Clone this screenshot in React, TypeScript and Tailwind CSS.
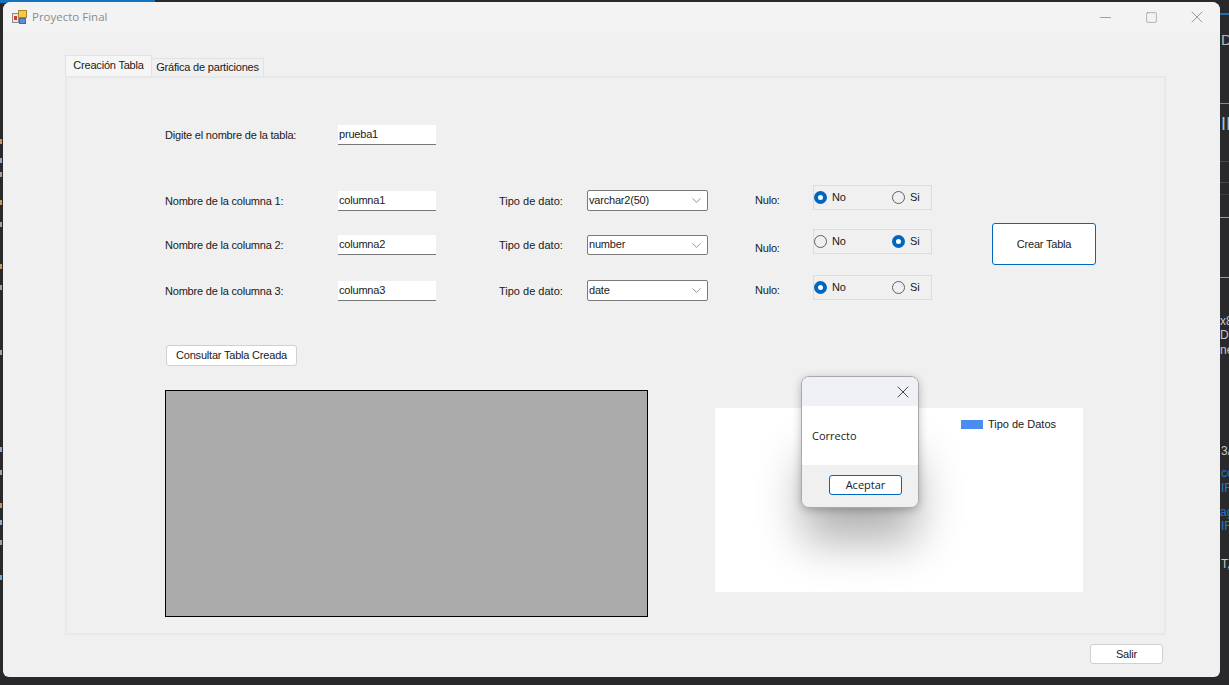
import { ChevronDown, Minus, Square, X } from 'lucide-react';

const columnas = [
  { nombre: 'columna1', tipo: 'varchar2(50)', nulo: 'No', nuloTop: 'mt-[7px]', rowTop: 'mt-[40px]', comboTop: 'mt-[5px] h-[21px]' },
  { nombre: 'columna2', tipo: 'number', nulo: 'Si', nuloTop: 'mt-[11px]', rowTop: 'mt-[19px]', comboTop: 'mt-[6px] h-[20px]' },
  { nombre: 'columna3', tipo: 'date', nulo: 'No', nuloTop: 'mt-[7px]', rowTop: 'mt-[21px]', comboTop: 'mt-[5px] h-[21px]' },
];

// piezas de la ventana de atras que asoman por los bordes
const fondo = [
  { text: 'D', cls: 'left-[1221px] top-[32px] text-[#b8b8b8] text-[15px]' },
  { text: 'II', cls: 'left-[1221px] top-[115px] text-[#9fc3d6] text-[18px]' },
  { text: 'x8', cls: 'left-[1220px] top-[315px] text-[#c8c8c8] text-[12px]' },
  { text: 'Dra', cls: 'left-[1220px] top-[329px] text-[#c8c8c8] text-[12px]' },
  { text: 'ne', cls: 'left-[1220px] top-[344px] text-[#c8c8c8] text-[12px]' },
  { text: '3/', cls: 'left-[1221px] top-[445px] text-[#c8c8c8] text-[12px]' },
  { text: 'cc', cls: 'left-[1221px] top-[467px] text-[#1e78c8] text-[12px]' },
  { text: 'IF', cls: 'left-[1221px] top-[482px] text-[#1e78c8] text-[12px]' },
  { text: 'ag', cls: 'left-[1220px] top-[506px] text-[#1e78c8] text-[12px]' },
  { text: 'IF', cls: 'left-[1221px] top-[520px] text-[#1e78c8] text-[12px]' },
  { text: 'T,', cls: 'left-[1221px] top-[558px] text-[#c8c8c8] text-[12px]' },
];

const lineas = [
  'top-[103px] bg-[#8a8a8a]',
  'top-[161px] bg-[#48484c]',
  'top-[182px] bg-[#48484c]',
  'top-[194px] bg-[#3c3c40]',
  'top-[217px] bg-[#9a9a9a]',
  'top-[277px] bg-[#9a9a9a]',
];

const marcas = [
  'top-[139px] bg-[#c79358]',
  'top-[200px] bg-[#c79358]',
  'top-[264px] bg-[#c79358]',
  'top-[503px] bg-[#c79358]',
  'top-[575px] bg-[#6fa8d8]',
  'top-[158px] bg-[#8fa9c4]',
  'top-[172px] bg-[#a0a0a0]',
  'top-[222px] bg-[#a0a0a0]',
  'top-[285px] bg-[#a0a0a0]',
  'top-[350px] bg-[#a0a0a0]',
  'top-[447px] bg-[#8fa9c4]',
  'top-[470px] bg-[#a0a0a0]',
  'top-[520px] bg-[#8fa9c4]',
  'top-[540px] bg-[#a0a0a0]',
];

function Radio({ checked, label, width }: { checked: boolean; label: string; width: string }) {
  return (
    <div className={`flex items-center ${width}`}>
      {checked ? (
        <span className="box-border w-[13px] h-[13px] rounded-full border-[4px] border-[#0067c0] bg-white" />
      ) : (
        <span className="box-border w-[13px] h-[13px] rounded-full border border-[#5f5f5f] bg-[#f0f0f0]" />
      )}
      <span className="ml-[5px] text-[#1a1a1a]">{label}</span>
    </div>
  );
}

function AppIcon() {
  return (
    <svg width="16" height="16" viewBox="0 0 16 16" className="shrink-0">
      <rect x="0.5" y="4.5" width="6" height="9" fill="#e8e8e8" stroke="#8a8a8a" />
      <rect x="2" y="7" width="3" height="4" fill="#d8392b" />
      <rect x="6.5" y="1.5" width="8" height="7" fill="#f7c93e" stroke="#a9882a" />
      <rect x="7.5" y="9.5" width="6" height="5" fill="#5b8fd8" stroke="#47689c" />
    </svg>
  );
}

export default function App() {
  return (
    <div className="relative w-[1229px] h-[685px] overflow-hidden bg-[#29292c] font-['Liberation_Sans',sans-serif] text-[11px] tracking-[-0.2px] text-[#1a1a1a]">
      {/* escritorio de fondo */}
      <div className="absolute left-0 top-0 w-[155px] h-[3px] bg-[#1273c0]" />
      <div className="absolute left-[1218px] top-[13px] w-[11px] h-[2px] bg-[#1f6fb0]" />
      {lineas.map((l) => (
        <div key={l} className={`absolute left-[1218px] w-[11px] h-px ${l}`} />
      ))}
      {fondo.map((f) => (
        <span key={f.cls} className={`absolute leading-none tracking-normal ${f.cls}`}>
          {f.text}
        </span>
      ))}
      {marcas.map((m) => (
        <div key={m} className={`absolute left-0 w-[2px] h-[5px] ${m}`} />
      ))}

      {/* ventana principal */}
      <div className="absolute left-[3px] top-[2px] w-[1217px] h-[675px] rounded-t-[8px] rounded-b-[6px] bg-[#f0f0f0] flex flex-col">
        <div className="h-[30px] shrink-0 flex items-center pl-[9px] rounded-t-[8px] bg-[#f3f3f3]">
          <AppIcon />
          <span className="ml-[4px] font-['Open_Sans',sans-serif] tracking-normal text-[#8b8b8b] text-[11.5px]">Proyecto Final</span>
          <div className="ml-auto flex items-center text-[#7a7a7a]">
            <Minus size={17} strokeWidth={1} className="mr-[31px]" />
            <Square size={13} strokeWidth={1} className="mr-[29px]" />
            <X size={20} strokeWidth={0.9} className="mr-[13px]" />
          </div>
        </div>

        <div className="pl-[62px] pr-[54px] pt-[23px]">
          <div className="flex items-end h-[21px]">
            <div className="box-border w-[87px] h-[21px] whitespace-nowrap bg-[#f6f6f6] border border-b-0 border-[#e2e2e2] flex items-center justify-center pb-[2px]">
              Creación Tabla
            </div>
            <div className="box-border w-[112px] h-[18px] whitespace-nowrap bg-[#f0f0f0] border border-b-0 border-l-0 border-[#e2e2e2] flex items-center justify-center">
              Gráfica de particiones
            </div>
          </div>

          <div className="box-border h-[559px] border-[2px] border-[#e8e8e8] pl-[98px]">
            <div className="flex items-center h-[20px] mt-[47px]">
              <span className="w-[173px]">Digite el nombre de la tabla:</span>
              <div className="box-border w-[98px] h-[20px] bg-white border-b border-[#777] pl-[1px] flex items-center">prueba1</div>
            </div>

            <div className="flex items-start">
              <div className="w-[767px]">
                {columnas.map((c, i) => (
                  <div key={c.nombre} className={`flex items-start h-[25px] ${c.rowTop}`}>
                    <span className="w-[173px] mt-[8px]">Nombre de la columna {i + 1}:</span>
                    <div className="box-border w-[98px] h-[20px] mt-[6px] bg-white border-b border-[#777] pl-[1px] flex items-center">{c.nombre}</div>
                    <span className="ml-[63px] w-[88px] mt-[8px] tracking-normal">Tipo de dato:</span>
                    <div className={`box-border w-[121px] bg-white border border-[#7a7a7a] rounded-[2px] pl-[1px] pr-[3px] flex items-center justify-between ${c.comboTop}`}>
                      <span className="-mt-[1px]">{c.tipo}</span>
                      <ChevronDown size={15} strokeWidth={1} className="text-[#555]" />
                    </div>
                    <span className={`ml-[47px] w-[58px] ${c.nuloTop}`}>Nulo:</span>
                    <div className="box-border w-[119px] h-[25px] border border-[#dcdcdc] flex items-start pt-[3px]">
                      <Radio checked={c.nulo === 'No'} label="No" width="w-[78px]" />
                      <Radio checked={c.nulo === 'Si'} label="Si" width="w-[38px]" />
                    </div>
                  </div>
                ))}
              </div>
              <button className="box-border ml-[60px] mt-[78px] w-[104px] h-[42px] bg-white border border-[#0067c0] rounded-[3px] text-[#1a1a1a]">
                Crear Tabla
              </button>
            </div>

            <button className="box-border block ml-[1px] mt-[45px] w-[131px] h-[21px] bg-white border border-[#d0d0d0] rounded-[3px] text-[#1a1a1a]">
              Consultar Tabla Creada
            </button>

            <div className="flex items-start mt-[24px]">
              <div className="box-border w-[483px] h-[227px] bg-[#ababab] border border-black" />
              <div className="ml-[67px] mt-[18px] w-[368px] h-[184px] bg-white flex justify-end items-start pt-[11px] pr-[27px]">
                <span className="w-[22px] h-[9px] mt-[1px] bg-[#4a8df0]" />
                <span className="ml-[5px] leading-[11px] tracking-normal">Tipo de Datos</span>
              </div>
            </div>
          </div>

          <div className="flex justify-end pr-[3px] mt-[9px]">
            <button className="box-border w-[73px] h-[20px] bg-white border border-[#d0d0d0] rounded-[3px] text-[#1a1a1a]">Salir</button>
          </div>
        </div>
      </div>

      {/* dialogo */}
      <div className="absolute left-[815px] top-[440px] w-[90px] h-[60px] pointer-events-none shadow-[0_30px_45px_12px_rgba(0,0,0,0.3)]" />
      <div className="absolute left-[801px] top-[376px] box-border w-[118px] h-[132px] rounded-[8px] border border-[#a9a9a9] overflow-hidden flex flex-col font-['Open_Sans',sans-serif] text-[11px] tracking-normal shadow-[0_2px_8px_rgba(0,0,0,0.25)]">
        <div className="h-[29px] shrink-0 bg-[#eff1f6] flex items-center justify-end pr-[5px]">
          <X size={20} strokeWidth={1} className="text-[#222]" />
        </div>
        <div className="h-[59px] shrink-0 bg-white flex items-center pl-[10px] pt-[2px]">Correcto</div>
        <div className="flex-1 bg-[#f0f0f0] pl-[27px] pt-[10px]">
          <button className="box-border w-[73px] h-[20px] bg-white border border-[#0067c0] rounded-[3px] text-[#1a1a1a]">Aceptar</button>
        </div>
      </div>
    </div>
  );
}
